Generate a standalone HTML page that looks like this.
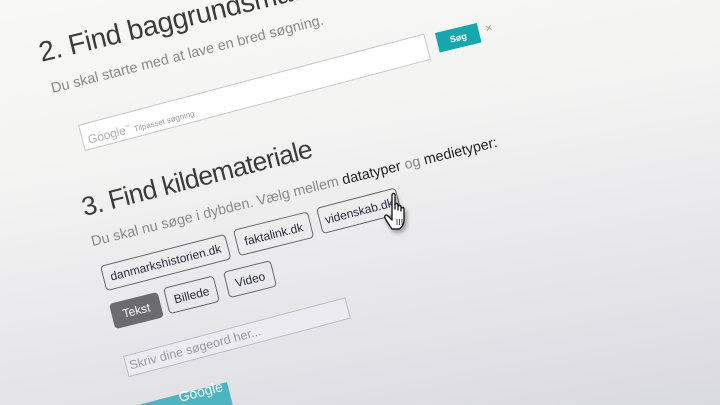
<!DOCTYPE html>
<html><head><meta charset="utf-8"><style>
html{margin:0;padding:0;width:720px;height:405px;overflow:hidden;background:linear-gradient(170deg,#f8f8f6 0%,#f3f3f2 35%,#e6e6ea 70%,#d9d9e0 100%)}
body{margin:0;padding:0;width:720px;height:405px;overflow:hidden;position:relative;font-family:"Liberation Sans",sans-serif}
#w{position:absolute;left:0;top:0;width:720px;height:405px;overflow:hidden}
.a{position:absolute;transform-origin:0 0;white-space:nowrap}
.t{line-height:1}
.btn{box-sizing:border-box;border:1px solid #6a6a6e;border-radius:4px;display:flex;align-items:center;justify-content:center;font-size:12px;color:#2a2a40}
</style></head><body><div id="w">

<div class="a t" style="left:42px;top:64px;font-size:28px;color:#3c3c3c;letter-spacing:-0.3px;transform:rotate(-13.6deg) translateY(-0.9em)">2. Find baggrundsmateriale</div>
<div class="a t" style="left:53px;top:95px;font-size:14.5px;color:#8a8a8a;transform:rotate(-14.2deg) translateY(-0.9em)">Du skal starte med at lave en bred søgning.</div>

<div class="a" style="left:78px;top:125px;width:358px;height:27px;box-sizing:border-box;background:#fff;border:1px solid #c8c8c8;transform:rotate(-14.8deg)">
  <span style="position:absolute;left:5px;top:9px;font-size:12px;color:#b0b0b0">Google<sup style="font-size:5px">™</sup> <span style="font-size:8px;color:#999">Tilpasset søgning</span></span>
</div>
<div class="a" style="left:435px;top:33px;width:43px;height:20px;background:#16a6ad;color:#fff;font-size:9px;font-weight:bold;display:flex;align-items:center;justify-content:center;transform:rotate(-13.5deg)">Søg</div>
<div class="a t" style="left:484px;top:23px;font-size:12px;color:#999;transform:rotate(-14deg)">×</div>

<div class="a t" style="left:85px;top:218px;font-size:26.5px;color:#3c3c3c;letter-spacing:-0.7px;transform:rotate(-14.5deg) translateY(-0.9em)">3. Find kildemateriale</div>
<div class="a t" style="left:93px;top:248px;font-size:14.4px;color:#8a8a8a;transform:rotate(-13.8deg) translateY(-0.9em)">Du skal nu søge i dybden. Vælg mellem <span style="color:#222">datatyper</span> og <span style="color:#222">medietyper:</span></div>

<div class="a btn" style="left:100px;top:266px;width:129px;height:26px;transform:rotate(-14.4deg)">danmarkshistorien.dk</div>
<div class="a btn" style="left:233px;top:230px;width:77px;height:27px;transform:rotate(-14deg)">faktalink.dk</div>
<div class="a btn" style="left:316px;top:208px;width:82px;height:27px;transform:rotate(-14.5deg)">videnskab.dk</div>

<div class="a btn" style="left:109px;top:304px;width:50px;height:26px;background:#6b6b70;border-color:#6b6b70;color:#fff;transform:rotate(-14deg)">Tekst</div>
<div class="a btn" style="left:163px;top:288px;width:52px;height:27px;transform:rotate(-14deg)">Billede</div>
<div class="a btn" style="left:223px;top:272px;width:49px;height:27px;transform:rotate(-14deg)">Video</div>

<div class="a" style="left:123px;top:356px;width:230px;height:22px;box-sizing:border-box;background:#ebebf1;border:1px solid #bdbdc2;transform:rotate(-14.8deg)">
  <span style="position:absolute;left:3px;top:3px;font-size:12.5px;color:#9a9aa0">Skriv dine søgeord her...</span>
</div>

<svg style="position:absolute;left:120px;top:365px" width="140" height="40" viewBox="0 0 140 40">
  <polygon points="17.9,40 106.9,17 112.8,40" fill="#4fb4c2"/>
  <text x="0" y="0" transform="translate(60,37) rotate(-14.5)" fill="#fff" font-size="14" font-family="Liberation Sans, sans-serif">Google</text>
</svg>

<svg class="a" style="left:382px;top:192px" width="34" height="46" viewBox="0 0 34 46">
  <path d="M10 3 C10 1 13 1 13 3 L13 17 L13 13 C13 11 16 11 16 13 L16 18 L16 15 C16 13 19 13 19 15 L19 19 L19 17 C19 15 22 15 22 17 L22 28 C22 33 19 36 17 37 L10 37 C8 34 5 30 3 26 C2 24 4 22 6 24 L10 28 Z" fill="#fff" stroke="#222" stroke-width="1.4" stroke-linejoin="round" filter="drop-shadow(2px 3px 2px rgba(0,0,0,.35))"/>
  <path d="M15 27 L15 33 M17.5 27 L17.5 33 M20 27 L20 33" stroke="#222" stroke-width="0.8"/>
</svg>

</div></body></html>
